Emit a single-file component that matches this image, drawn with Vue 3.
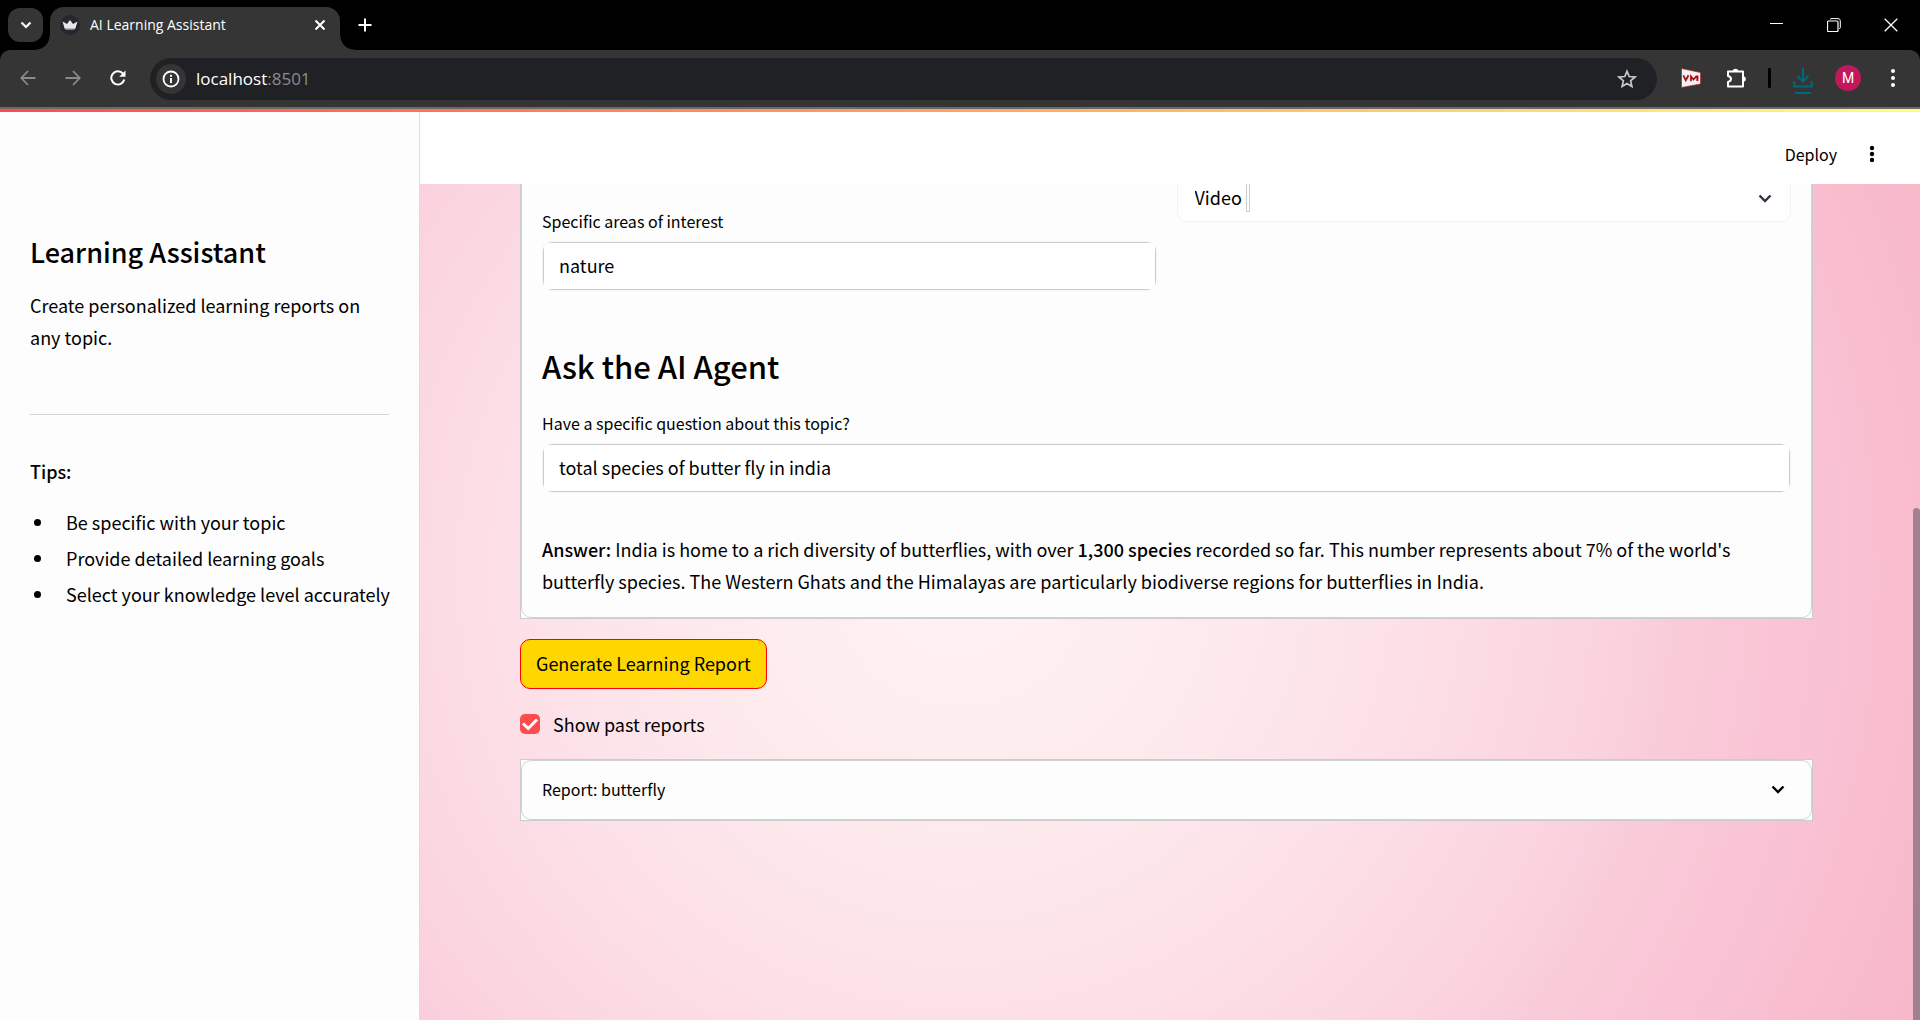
<script setup>
import { ref } from 'vue'

const tips = [
  'Be specific with your topic',
  'Provide detailed learning goals',
  'Select your knowledge level accurately',
]
const interest = ref('nature')
const question = ref('total species of butter fly in india')
const showPast = ref(true)
const format = ref('Video')
const address = ref('localhost:8501')
</script>

<template>
  <div class="window">
    <header class="tabstrip">
      <button class="tab-search" aria-label="Search tabs">
        <svg width="12" height="8" viewBox="0 0 12 8"><path d="M1.5 1.5 6 6l4.500-4.500" fill="none" stroke="#fff" stroke-width="2.200" /></svg>
      </button>
      <div class="tab">
        <svg class="favicon" width="20" height="20" viewBox="0 0 20 20">
          <circle cx="10" cy="10" r="10" fill="#262730" />
          <path d="M2.500 6.500 7 9l3-4 3 4 4.500-2.500L15.500 13c-.3 1-1 1.300-2 1.300h-7c-1 0-1.700-.3-2-1.300z" fill="#e8e8ea" />
          <path d="M4.500 13h11c-.3 1-1 1.400-2 1.400h-7c-1 0-1.700-.4-2-1.400z" fill="#b4b4ba" />
        </svg>
        <span class="tab-title">AI Learning Assistant</span>
        <button class="plain" aria-label="Close tab">
          <svg width="12" height="12" viewBox="0 0 12 12"><path d="M1.500 1.500l9 9M10.500 1.500l-9 9" stroke="#fff" stroke-width="2" /></svg>
        </button>
      </div>
      <button class="plain new-tab" aria-label="New tab">
        <svg width="14" height="14" viewBox="0 0 14 14"><path d="M7 .5v13M.5 7h13" stroke="#fff" stroke-width="2" /></svg>
      </button>
      <div class="window-controls">
        <button class="plain" aria-label="Minimize">
          <svg width="14" height="14" viewBox="0 0 14 14"><path d="M0 5.500h13" stroke="#fff" /></svg>
        </button>
        <button class="plain" aria-label="Restore">
          <svg width="14" height="14" viewBox="0 0 14 14" fill="none" stroke="#fff"><rect x=".5" y="3" width="10.500" height="10.500" rx="1" stroke-width="1.200" /><path d="M3 1.500 4 .6h7q2.300 0 2.300 2.300v7l-1 1" /></svg>
        </button>
        <button class="plain" aria-label="Close">
          <svg width="14" height="14" viewBox="0 0 14 14"><path d="M.7.7l12.600 12.600M13.300.7.7 13.300" stroke="#fff" stroke-width="1.300" /></svg>
        </button>
      </div>
    </header>

    <nav class="toolbar">
      <button class="plain nav-button" aria-label="Back">
        <svg width="16" height="16" viewBox="0 0 16 16" fill="none" stroke="#8a8a8a" stroke-width="1.800"><path d="M15.500 8H1.500M8 1 1.300 8 8 15" /></svg>
      </button>
      <button class="plain nav-button" aria-label="Forward">
        <svg width="16" height="16" viewBox="0 0 16 16" fill="none" stroke="#8a8a8a" stroke-width="1.800"><path d="M.5 8h14M8 1l6.700 7L8 15" /></svg>
      </button>
      <button class="plain nav-button" aria-label="Reload">
        <svg width="16" height="16" viewBox="0 0 16 16"><path d="M14.300 9.500A6.600 6.600 0 1 1 13 3.700l1 1.300" fill="none" stroke="#fff" stroke-width="2" /><path d="M15.500.5v6.300H9.200z" fill="#fff" /></svg>
      </button>
      <div class="omnibox">
        <button class="site-info" aria-label="View site information">
          <svg width="18" height="18" viewBox="0 0 18 18"><circle cx="9" cy="9" r="7.500" fill="none" stroke="#fff" stroke-width="1.800" /><path d="M9 8v5M9 4.700v2" stroke="#fff" stroke-width="1.900" /></svg>
        </button>
        <a class="address" :href="'http://' + address">localhost<span>:8501</span></a>
        <button class="plain star" aria-label="Bookmark this tab">
          <svg width="20" height="20" viewBox="0 0 20 20"><path d="M10 2.300l2.200 5.200 5.800.5-4.400 3.800 1.300 5.600L10 14.500l-4.900 2.900 1.300-5.600L2 8l5.800-.5z" fill="none" stroke="#c7c7c7" stroke-width="1.700" /></svg>
        </button>
      </div>
      <div class="extensions">
        <button class="plain vm" aria-label="VM extension">
          <svg width="20" height="20" viewBox="0 0 20 20"><path d="M.5.500 19.500 4.500v11.500L.5 19.500z" fill="#f4f2f2" stroke="#b3202a" stroke-width=".7" /><path d="M2.300 7.300l2.500 5L7.500 7.300M10 13.300V8.500l2.600 3L15.200 8.500h1.300v4.300M16.300 8.500v4.600" fill="none" stroke="#b00c14" stroke-width="1.800" /></svg>
        </button>
        <button class="plain" aria-label="Extensions">
          <svg width="22" height="22" viewBox="0 0 22 22"><path d="M3 4.500h15V19.500H3V15q3-.8 3-3t-3-3z" fill="none" stroke="#fff" stroke-width="2" stroke-linejoin="round" /><path d="M7.700 4.500a2.800 2.800 0 0 1 5.600 0zM18 9.200a2.800 2.800 0 0 1 0 5.600z" fill="#fff" /></svg>
        </button>
        <i class="divider"></i>
        <button class="plain download" aria-label="Downloads">
          <svg width="20" height="27" viewBox="0 0 20 27" fill="none" stroke="#00687a" stroke-width="2.200"><path d="M10 1v13M4.500 9l5.500 5.500L15.500 9M1.200 14v5.500h17.600V14M2 26h16" /></svg>
        </button>
        <button class="avatar" aria-label="Profile">M</button>
        <button class="plain" aria-label="Browser menu">
          <svg width="4" height="20" viewBox="0 0 4 20" fill="#fff"><circle cx="2" cy="3" r="2" /><circle cx="2" cy="10" r="2" /><circle cx="2" cy="17" r="2" /></svg>
        </button>
      </div>
    </nav>

    <div class="decoration"></div>

    <div class="app">
      <aside class="sidebar">
        <h2>Learning Assistant</h2>
        <p>Create personalized learning reports on any topic.</p>
        <hr />
        <p><strong>Tips:</strong></p>
        <ul>
          <li v-for="tip in tips" :key="tip">{{ tip }}</li>
        </ul>
      </aside>

      <div class="content">
        <header class="app-header">
          <button class="plain deploy">Deploy</button>
          <button class="plain" aria-label="Main menu">
            <svg width="6" height="18" viewBox="0 0 6 18"><circle cx="3" cy="3" r="2.200" /><circle cx="3" cy="9" r="2.200" /><circle cx="3" cy="15" r="2.200" /></svg>
          </button>
        </header>

        <main class="main">
          <section class="card question-card">
            <div class="card-inner">
              <div class="columns">
                <div class="field">
                  <label for="interest">Specific areas of interest</label>
                  <div class="input-wrap"><input id="interest" v-model="interest" type="text" /></div>
                </div>
                <div class="select-wrap">
                  <select v-model="format" aria-label="Preferred format"><option>Video</option></select>
                  <i class="select-caret"></i>
                  <svg class="select-chevron" width="14" height="9" viewBox="0 0 14 9"><path d="M1.500 1.500 7 7l5.500-5.500" fill="none" stroke="#31333f" stroke-width="2.400" /></svg>
                </div>
              </div>
              <h3>Ask the AI Agent</h3>
              <div class="field">
                <label for="question">Have a specific question about this topic?</label>
                <div class="input-wrap"><input id="question" v-model="question" type="text" /></div>
              </div>
              <p class="answer">
                <strong>Answer:</strong> India is home to a rich diversity of butterflies, with over
                <strong>1,300 species</strong> recorded so far. This number represents about 7% of the
                world's butterfly species. The Western Ghats and the Himalayas are particularly
                biodiverse regions for butterflies in India.
              </p>
            </div>
          </section>

          <button class="generate">Generate Learning Report</button>

          <label class="check">
            <input v-model="showPast" type="checkbox" />
            <span>Show past reports</span>
          </label>

          <section class="card">
            <button class="card-inner report">
              <span>Report: butterfly</span>
              <svg width="14" height="9" viewBox="0 0 14 9"><path d="M1.500 1.500 7 7l5.500-5.500" fill="none" stroke="#000" stroke-width="2.400" /></svg>
            </button>
          </section>

          <i class="scroll-thumb"></i>
        </main>
      </div>
    </div>
  </div>
</template>

<style>
body {
  margin: 0;
}
</style>

<style scoped>
* {
  box-sizing: border-box;
}
.window {
  display: flex;
  flex-direction: column;
  min-height: 100vh;
  background: #000;
  color: #000;
  font-family: 'Noto Sans CJK SC', 'Noto Sans', sans-serif;
  font-size: 18px;
  line-height: 32px;
}
button,
input,
select {
  font: inherit;
  color: inherit;
  margin: 0;
}
.plain {
  display: flex;
  align-items: center;
  justify-content: center;
  padding: 0;
  border: 0;
  background: none;
}

/* Browser tab strip */
.tabstrip {
  display: flex;
  align-items: flex-start;
  height: 50px;
  padding: 7px 22px 0 8px;
}
.tab-search {
  position: relative;
  z-index: 1;
  display: flex;
  align-items: center;
  justify-content: center;
  width: 35px;
  height: 34px;
  margin-top: 1px;
  padding: 0;
  border: 0;
  border-radius: 12px;
  background: #353535;
}
.tab {
  position: relative;
  display: flex;
  align-items: center;
  width: 290px;
  height: 43px;
  margin-left: 7px;
  padding: 0 14px 7px 10px;
  border-radius: 14px 14px 0 0;
  background: #353535;
  color: #fff;
}
.tab::before,
.tab::after {
  content: '';
  position: absolute;
  bottom: 0;
  width: 14px;
  height: 14px;
}
.tab::before {
  right: 100%;
  background: radial-gradient(circle at 0 0, transparent 13px, #353535 14px);
}
.tab::after {
  left: 100%;
  background: radial-gradient(circle at 100% 0, transparent 13px, #353535 14px);
}
.tab-title {
  flex: 1;
  margin-left: 10px;
  font-family: 'Open Sans', 'Noto Sans', sans-serif;
  font-size: 14px;
  line-height: 20px;
}
.new-tab {
  margin: 11px 0 0 18px;
}
.window-controls {
  display: flex;
  gap: 43px;
  margin: 11px 0 0 auto;
}

/* Browser toolbar */
.toolbar {
  display: flex;
  align-items: center;
  height: 59px;
  padding: 0 25px 2px 20px;
  border-bottom: 2px solid #6a6a6a;
  border-radius: 10px 10px 0 0;
  background: #353535;
}
.nav-button {
  margin-right: 29px;
}
.omnibox {
  display: flex;
  flex: 1;
  align-items: center;
  height: 42px;
  margin: 2px 0 0 -5px;
  padding: 0 20px 0 6px;
  border-radius: 21px;
  background: #202124;
}
.site-info {
  display: flex;
  align-items: center;
  justify-content: center;
  width: 30px;
  height: 30px;
  padding: 0;
  border: 0;
  border-radius: 50%;
  background: #353535;
}
.address {
  flex: 1;
  margin-left: 10px;
  color: #fff;
  font-family: 'Open Sans', 'Noto Sans', sans-serif;
  font-size: 17px;
  line-height: 24px;
  text-decoration: none;
}
.address span {
  color: #8c8c8c;
}
.extensions {
  display: flex;
  align-items: center;
  margin-left: 24px;
}
.vm {
  margin-right: 24px;
}
.divider {
  width: 3px;
  height: 20px;
  margin: 0 22px 0 21px;
  border-radius: 1px;
  background: #000;
}
.download {
  margin-top: 6px;
}
.avatar {
  width: 26px;
  height: 26px;
  margin: 0 30px 0 22px;
  padding: 0;
  border: 0;
  border-radius: 50%;
  background: #c2185b;
  color: #fff;
  font-family: Roboto, sans-serif;
  font-size: 14px;
  line-height: 26px;
}

/* App page */
.decoration {
  height: 3px;
  background: linear-gradient(90deg, #ff4b4b, #fffd80);
}
.app {
  display: flex;
  flex: 1;
}
.sidebar {
  width: 420px;
  padding: 119px 30px 40px;
  border-right: 1px solid #dcdcdc;
  background: #fdfdfd;
}
.sidebar h2 {
  margin: 0;
  font-size: 27px;
  font-weight: 500;
  line-height: 42px;
}
.sidebar p {
  margin: 16px 0 0;
}
.sidebar hr {
  margin: 61px 0 40px;
  border: 0;
  border-top: 1px solid #d3d3d3;
}
.sidebar ul {
  margin: 19px 0 0;
  padding: 0;
  list-style: none;
}
.sidebar li {
  display: flex;
  align-items: center;
  margin-bottom: 4px;
  white-space: nowrap;
}
.sidebar li::before {
  content: '';
  flex: none;
  width: 7px;
  height: 7px;
  margin: 0 25px 0 4px;
  border-radius: 50%;
  background: #000;
}
strong {
  font-weight: 500;
}
.content {
  display: flex;
  flex: 1;
  flex-direction: column;
  min-width: 0;
}
.app-header {
  display: flex;
  align-items: center;
  justify-content: flex-end;
  gap: 32px;
  height: 72px;
  padding: 12px 45px 0 0;
  background: #fff;
}
.deploy {
  font-size: 16px;
}
.main {
  position: relative;
  flex: 1;
  overflow: hidden;
  padding: 0 107px 40px 100px;
  background: radial-gradient(
    circle at 36% 47%,
    #fff2f3 0,
    #fdeaed 250px,
    #fce4ea 380px,
    #fddfe7 460px,
    #fbdae3 540px,
    #fad2de 660px,
    #f9cbd9 720px,
    #f9c1d4 880px,
    #f8bccd 960px,
    #f7b8ca 1040px
  );
}
.card {
  border: 1px solid #ccc;
  background: #fff;
}
.card-inner {
  width: 100%;
  padding: 20px;
  border: 1px solid #d0d2d2;
  border-radius: 10px;
  background: #fdfdfd;
}
.question-card {
  margin-top: -34px;
}
.columns {
  display: grid;
  grid-template-columns: 1fr 1fr;
  gap: 20px;
}
.columns .field {
  padding-top: 35px;
}
.field label {
  display: block;
  font-size: 16px;
  line-height: 28px;
}
.input-wrap {
  height: 50px;
  margin-top: 6px;
  overflow: hidden;
  border: 1px solid #f6f6f6;
  border-radius: 10px;
}
.input-wrap input {
  display: block;
  width: 100%;
  height: 48px;
  padding: 0 15px 2px;
  border: 1px solid #ccc;
  background: #fff;
}
.select-wrap {
  position: relative;
  height: 50px;
}
.select-wrap select {
  width: 100%;
  height: 50px;
  padding: 0 17px;
  border: 1px solid #f0f2f6;
  border-radius: 10px;
  background: #fff;
  appearance: none;
}
.select-caret {
  position: absolute;
  top: 8px;
  left: 69px;
  width: 4px;
  height: 32px;
  border: 1px solid #ccc;
}
.select-chevron {
  position: absolute;
  top: 22px;
  right: 19px;
}
.question-card h3 {
  margin: 49px 0 17px;
  font-size: 31px;
  font-weight: 500;
  line-height: 52px;
}
.answer {
  margin: 40px 0 0;
}
.generate {
  display: block;
  height: 50px;
  margin-top: 20px;
  padding: 0 15px 2px;
  border: 1px solid #f00;
  border-radius: 10px;
  background: #ffd700;
}
.check {
  display: flex;
  align-items: center;
  width: max-content;
  margin: 19px 0;
  gap: 13px;
}
.check input {
  width: 20px;
  height: 20px;
  border-radius: 5px;
  background: #ff4b4b;
  appearance: none;
}
.check input:checked {
  background: #ff4b4b
    url("data:image/svg+xml,%3Csvg xmlns='http://www.w3.org/2000/svg' viewBox='0 0 20 20'%3E%3Cpath d='M3 9.500l5.300 5L17 5.500' fill='none' stroke='%23fff' stroke-width='3'/%3E%3C/svg%3E");
}
.report {
  display: flex;
  align-items: center;
  justify-content: space-between;
  height: 60px;
  padding: 0 26px 2px 20px;
  font-size: 16px;
}
.scroll-thumb {
  position: absolute;
  top: 324px;
  right: 0;
  bottom: 0;
  width: 7px;
  border-radius: 4px 4px 0 0;
  background: #a38090;
}
</style>
